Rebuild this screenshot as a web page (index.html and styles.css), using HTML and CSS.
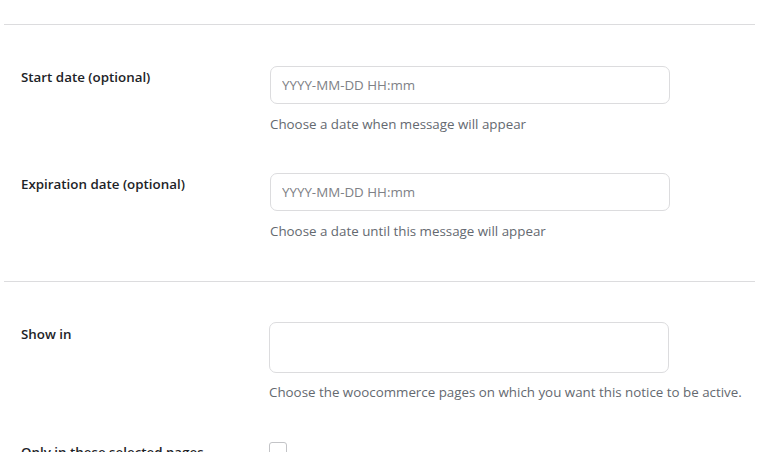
FILE: index.html
```html
<!DOCTYPE html>
<html lang="en">
<head>
<meta charset="utf-8">
<title>Notice settings</title>
<link rel="stylesheet" href="styles.css">
</head>
<body>
<div class="settings">
  <hr class="divider">
  <section class="group group-dates">
    <div class="row">
      <label class="label" for="start-date">Start date (optional)</label>
      <div class="field">
        <input class="text-input" id="start-date" type="text" placeholder="YYYY-MM-DD HH:mm">
        <p class="hint">Choose a date when message will appear</p>
      </div>
    </div>
    <div class="row">
      <label class="label" for="end-date">Expiration date (optional)</label>
      <div class="field">
        <input class="text-input" id="end-date" type="text" placeholder="YYYY-MM-DD HH:mm">
        <p class="hint">Choose a date until this message will appear</p>
      </div>
    </div>
  </section>
  <hr class="divider">
  <section class="group group-pages">
    <div class="row">
      <label class="label label-tall" for="show-in">Show in</label>
      <div class="field">
        <div class="multi-select" id="show-in"></div>
        <p class="hint">Choose the woocommerce pages on which you want this notice to be active.</p>
      </div>
    </div>
    <div class="row">
      <label class="label" for="only-selected">Only in these selected pages</label>
      <div class="field">
        <input class="checkbox" id="only-selected" type="checkbox">
      </div>
    </div>
  </section>
</div>
</body>
</html>
```
FILE: styles.css
```css
html, body {
  margin: 0;
  padding: 0;
  background: #ffffff;
}

body {
  font-family: "Open Sans", "Noto Sans", sans-serif;
  font-size: 13.35px;
  color: #3c434a;
  overflow: hidden;
  height: 452px;
}

.settings {
  padding: 24px 8px 0 4px;
}

.divider {
  border: 0;
  border-top: 1px solid #dcdcde;
  margin: 0;
}

.group-dates {
  padding: 41px 0 40px;
}

.group-pages {
  padding: 40px 0 0;
}

.row {
  display: flex;
  align-items: flex-start;
}

.row + .row {
  margin-top: 39px;
}

.label {
  flex: 0 0 249px;
  padding-left: 17px;
  padding-top: 1px;
  font-weight: 600;
  color: #1d2327;
  line-height: 20px;
}

.label-tall {
  padding-top: 2px;
}

.field {
  flex: 0 0 auto;
}

.text-input {
  box-sizing: border-box;
  width: 400px;
  height: 38px;
  margin: 0;
  padding: 0 11px;
  border: 1px solid #dcdcde;
  border-radius: 7px;
  font: inherit;
  color: #2c3338;
  background: #fff;
  outline: none;
  display: block;
}

.text-input::placeholder {
  color: #7e8186;
}

.multi-select {
  box-sizing: border-box;
  width: 400px;
  height: 51px;
  border: 1px solid #dcdcde;
  border-radius: 7px;
  margin-left: -1px;
}

.hint {
  margin: 10px 0 0;
  line-height: 20px;
  color: #646970;
}

.group-pages .hint {
  margin: 9px 0 0 -1px;
}

.checkbox {
  appearance: none;
  box-sizing: border-box;
  display: block;
  width: 18px;
  height: 18px;
  margin: 1px 0 0 -1px;
  border: 1px solid #c3c4c7;
  border-radius: 3px;
  background: #fff;
}
```
